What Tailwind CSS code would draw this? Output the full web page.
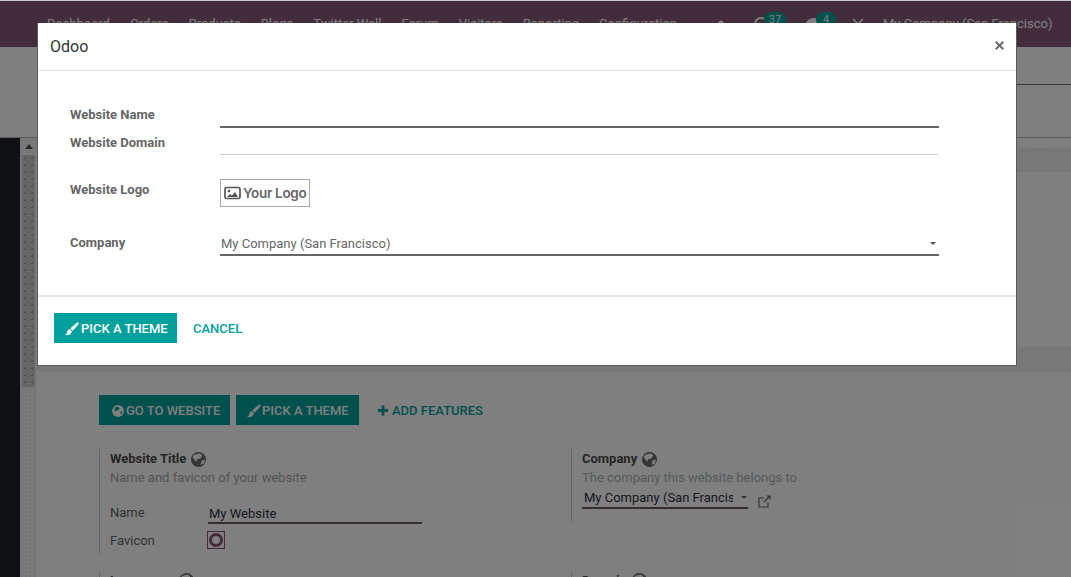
<!DOCTYPE html>
<html lang="en">
<head>
<meta charset="utf-8">
<title>Odoo</title>
<script src="https://cdn.jsdelivr.net/npm/@tailwindcss/browser@4"></script>
</head>
<body class="relative h-[577px] w-[1071px] overflow-hidden bg-white font-['Roboto',sans-serif] text-[13px] text-[#4c4c4c]">

<!-- page behind the dialog -->
<div class="h-px bg-[#c8c8c8]"></div>
<header class="flex h-[46px] items-center whitespace-nowrap bg-[#875a7b] pl-[47px] text-[13px] text-white">
  <nav class="flex shrink-0 gap-[20px]">
    <span>Dashboard</span><span>Orders</span><span>Products</span><span>Blogs</span><span>Twitter Wall</span><span>Forum</span><span>Visitors</span><span>Reporting</span><span>Configuration</span>
  </nav>
  <div class="ml-[38px] flex items-center">
    <svg class="h-4 w-3" viewBox="0 0 12 16" fill="#fff"><circle cx="6" cy="7" r="2.5"/><path d="M3 11h6v4H3z"/></svg>
    <div class="relative ml-[26px] h-4 w-4">
      <svg class="h-4 w-4" viewBox="0 0 16 16" fill="none" stroke="#fff" stroke-width="2"><circle cx="8" cy="8" r="6"/></svg>
      <span class="absolute left-[11px] top-[-4px] w-[22px] rounded-[8px] bg-[#00a09d] text-center text-[11px] leading-[15px] text-white">37</span>
    </div>
    <div class="relative ml-[37px] h-4 w-4">
      <svg class="h-4 w-4" viewBox="0 0 16 16" fill="#fff"><ellipse cx="8" cy="8" rx="8" ry="6"/></svg>
      <span class="absolute left-[10px] top-[-4px] w-[20px] rounded-[8px] bg-[#00a09d] text-center text-[11px] leading-[15px] text-white">4</span>
    </div>
    <svg class="ml-[30px] h-3 w-3" viewBox="0 0 12 12" stroke="#fff" stroke-width="1.5"><path d="M1 1l10 10M11 1L1 11"/></svg>
    <span class="ml-[19px]">My Company (San Francisco)</span>
  </div>
</header>
<section class="h-[91px] border-b border-[#b4b4b4] bg-white">
  <div class="ml-[700px] h-[38px] border-b border-[#7a6a76]"></div>
</section>

<main class="flex h-[439px] overflow-hidden">
  <aside class="w-5 shrink-0 bg-[#1e2028]"></aside>
  <div class="flex w-[17px] shrink-0 flex-col bg-[#f4f4f4] bg-[radial-gradient(#e6e6e6_1px,transparent_1px)] bg-[length:4px_4px]">
    <div class="flex h-[17px] items-center justify-center">
      <div class="h-0 w-0 border-x-[4px] border-b-[5px] border-x-transparent border-b-[#555]"></div>
    </div>
    <div class="ml-[2px] mr-[2px] h-[232px] bg-[#cccccc] bg-[radial-gradient(#999_1px,transparent_1px)] bg-[length:7px_7px]"></div>
  </div>
  <div class="min-w-0 flex-1 bg-white">
    <div class="mt-[10px] h-[24px] bg-[#f0f0f0] bg-[radial-gradient(#d0dde0_1px,transparent_1px)] bg-[length:9px_7px]"></div>
    <div class="mt-[175px] h-[25px] bg-[#f0f0f0] bg-[radial-gradient(#d0dde0_1px,transparent_1px)] bg-[length:9px_7px]"></div>

    <div class="ml-[62px] mt-[23px] flex items-center">
      <span class="flex h-[30px] w-[131px] items-center gap-[2px] bg-[#00a09d] pl-[13px] pt-px text-[13px] font-medium text-white">
        <svg class="h-[12px] w-[12px]" viewBox="0 0 14 14"><circle cx="7" cy="7" r="7" fill="#fff"/><path d="M3 3l4-1 2 2-2 2-2 0-1 2zM10 8l2-1v2l-2 2z" fill="#00a09d"/></svg>
        GO TO WEBSITE
      </span>
      <span class="ml-[6px] flex h-[30px] w-[123px] items-center gap-[1px] bg-[#00a09d] pl-[11px] pt-px text-[13px] font-medium text-white">
        <svg class="h-[14px] w-[14px]" viewBox="0 0 14 14" fill="#fff"><path d="M13.400.5c.5.4.4 1-.1 1.700-1.500 2.200-3.500 4.600-5.800 6.500L5.300 6.600C7.300 4.300 9.800 2.200 12 .7c.6-.4 1-.5 1.400-.2zM4.800 7.300l2 2c-.2 2.300-1.700 3.800-4 3.900-1.100.1-2.100-.3-2.800-1 1.300 0 1.800-.6 2-1.700.3-1.800 1.300-3 2.800-3.200z"/></svg>
        PICK A THEME
      </span>
      <span class="ml-[19px] flex items-center gap-[4px] pt-px text-[13px] font-medium text-[#00a09d]">
        <svg class="h-[11px] w-[10px]" viewBox="0 0 10 10" fill="#00a09d"><path d="M3.600 0h2.800v3.600H10v2.800H6.400V10H3.600V6.400H0V3.600h3.600z"/></svg>
        ADD FEATURES
      </span>
    </div>

    <div class="ml-[62px] mt-[24px] grid grid-cols-[472px_1fr]">
      <div class="h-[106px] border-l border-[#ccc] pl-[10px]">
        <div class="flex h-[20px] items-center gap-[5px] font-bold text-[#4c4c4c]">Website Title
          <svg class="h-[15px] w-[15px]" viewBox="0 0 14 14"><circle cx="7" cy="7" r="7" fill="#6a6a6a"/><path d="M3 2.500L8 1.500l2.500 1.500L9 6l-3 .5L5 9 3 7 1.500 5zM10 8l3-1-1 4-3 1z" fill="#fff"/></svg>
        </div>
        <div class="mt-[-1px] h-[20px] leading-[20px] text-[#a8a8a8]">Name and favicon of your website</div>
        <div class="mt-[16px] flex h-[26px] items-start">
          <span class="w-[98px] leading-[18px] text-[#666]">Name</span>
          <span class="h-[20px] w-[214px] border-b-2 border-[#6a5a66] pl-px leading-[20px] text-[#2a3042]">My Website</span>
        </div>
        <div class="flex items-center">
          <span class="w-[97px] pt-px text-[#666]">Favicon</span>
          <span class="flex h-[18px] w-[18px] items-center justify-center border border-[#875a7b]">
            <span class="h-[14px] w-[14px] rounded-full border-[3px] border-[#875a7b]"></span>
          </span>
        </div>
      </div>
      <div class="h-[74px] border-l border-[#ccc] pl-[10px]">
        <div class="flex h-[20px] items-center gap-[5px] font-bold text-[#4c4c4c]">Company
          <svg class="h-[15px] w-[15px]" viewBox="0 0 14 14"><circle cx="7" cy="7" r="7" fill="#6a6a6a"/><path d="M3 2.500L8 1.500l2.500 1.500L9 6l-3 .5L5 9 3 7 1.500 5zM10 8l3-1-1 4-3 1z" fill="#fff"/></svg>
        </div>
        <div class="mt-[-1px] h-[20px] leading-[20px] text-[#a8b4b8]">The company this website belongs to</div>
        <div class="flex items-start">
          <span class="flex h-[21px] w-[166px] items-center border-b-2 border-[#6a5a66] pl-[2px] text-[#2a3042]">
            <span class="w-[149px] overflow-hidden whitespace-nowrap">My Company (San Francisco)</span>
            <span class="ml-[8px] h-0 w-0 border-x-[3px] border-t-[3px] border-x-transparent border-t-[#666]"></span>
          </span>
          <svg class="ml-[10px] mt-[7px] h-[13px] w-[13px]" viewBox="0 0 13 13" fill="none" stroke="#6a6a6a" stroke-width="1.200"><path d="M10 7.500V12H1V3h5M6 7l6-6M8.500 1H12v3.500"/></svg>
        </div>
      </div>
      <div class="mt-[16px] h-8 border-l border-[#ccc] pl-[10px] font-bold">
        <span class="flex items-center gap-[12px]">Language
          <svg class="h-[15px] w-[15px]" viewBox="0 0 14 14"><circle cx="7" cy="7" r="7" fill="#6a6a6a"/><path d="M3 2.500L8 1.500l2.500 1.500L9 6l-3 .5L5 9 3 7 1.500 5zM10 8l3-1-1 4-3 1z" fill="#fff"/></svg>
        </span>
      </div>
      <div class="mt-[16px] h-8 border-l border-[#ccc] pl-[10px] font-bold">
        <span class="flex items-center gap-[5px]">Domain
          <svg class="h-[15px] w-[15px]" viewBox="0 0 14 14"><circle cx="7" cy="7" r="7" fill="#6a6a6a"/><path d="M3 2.500L8 1.500l2.500 1.500L9 6l-3 .5L5 9 3 7 1.500 5zM10 8l3-1-1 4-3 1z" fill="#fff"/></svg>
        </span>
      </div>
    </div>
  </div>
</main>

<!-- backdrop -->
<div class="absolute inset-x-0 bottom-0 top-px bg-black/50"></div>

<!-- dialog -->
<div class="absolute left-[37px] top-[23px] flex h-[343px] w-[980px] flex-col border-x border-b border-[#5a5a5a] bg-white text-[#666]">
  <div class="flex h-[48px] shrink-0 items-center justify-between border-b border-[#e2e2e2] px-[12px]">
    <h1 class="text-[16px] font-normal text-[#333]">Odoo</h1>
    <svg class="mb-[2px] h-[9px] w-[9px]" viewBox="0 0 9 9" stroke="#6b6b6b" stroke-width="2"><path d="M.7.7l7.600 7.600M8.300.7L.7 8.300"/></svg>
  </div>
  <div class="h-[224px] shrink-0 pl-[32px] pt-[32px]">
    <div class="flex h-[28px]">
      <label class="w-[150px] pt-[2px] font-bold leading-[20px]">Website Name</label>
      <div class="h-[25px] w-[719px] border-b-2 border-[#666]"></div>
    </div>
    <div class="flex h-[28px]">
      <label class="w-[150px] pt-[2px] font-bold leading-[20px]">Website Domain</label>
      <div class="h-[24px] w-[718px] border-b border-[#ccc]"></div>
    </div>
    <div class="mt-[20px] flex h-[29px]">
      <label class="w-[150px] pt-px font-bold leading-[20px]">Website Logo</label>
      <div class="flex h-[28px] w-[90px] items-center gap-[2px] border border-[#aaa] pl-[3px] font-['Inter',sans-serif] text-[13.500px] font-semibold tracking-[-0.3px] text-[#666]">
        <svg class="h-[14px] w-[17px] shrink-0" viewBox="0 0 17 14"><rect x="1" y="1.500" width="15" height="11" rx="1.500" fill="none" stroke="#555" stroke-width="1.700"/><circle cx="5" cy="5" r="1.300" fill="#555"/><path d="M3 11l3-3 2 1.500L11 6l3 5z" fill="#555"/></svg>
        Your Logo
      </div>
    </div>
    <div class="mt-[24px] flex h-[28px]">
      <label class="w-[150px] pt-px font-bold leading-[20px]">Company</label>
      <div class="flex h-[24px] w-[719px] items-center justify-between border-b-2 border-[#666] pl-px pr-[3px] pt-px text-[#666]">
        <span>My Company (San Francisco)</span>
        <span class="h-0 w-0 border-x-[3px] border-t-[3px] border-x-transparent border-t-[#555]"></span>
      </div>
    </div>
  </div>
  <div class="flex flex-1 items-start gap-[16px] border-t-2 border-[#e1e5e8] pl-[16px] pt-[16px]">
    <button class="flex h-[30px] w-[123px] items-center gap-[2px] bg-[#00a09d] pl-[11px] pt-px text-[13px] font-medium text-white">
      <svg class="h-[14px] w-[14px]" viewBox="0 0 14 14" fill="#fff"><path d="M13.400.5c.5.4.4 1-.1 1.700-1.500 2.200-3.500 4.600-5.800 6.500L5.300 6.600C7.300 4.300 9.800 2.200 12 .7c.6-.4 1-.5 1.400-.2zM4.800 7.300l2 2c-.2 2.300-1.700 3.800-4 3.900-1.100.1-2.100-.3-2.800-1 1.300 0 1.800-.6 2-1.700.3-1.800 1.300-3 2.800-3.200z"/></svg>
      PICK A THEME
    </button>
    <span class="flex h-[30px] items-center pt-px text-[13px] font-medium text-[#00a09d]">CANCEL</span>
  </div>
</div>
</body>
</html>
